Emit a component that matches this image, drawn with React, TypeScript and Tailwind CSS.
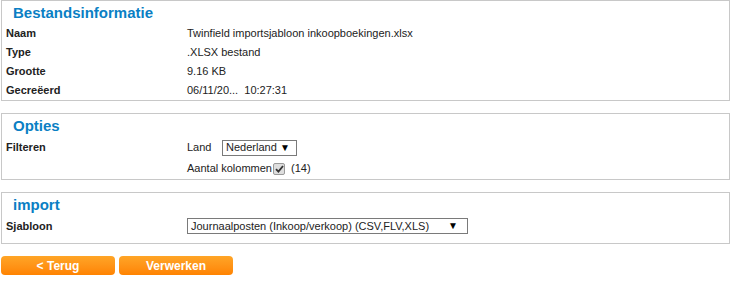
const rows = [
  ['Naam', 'Twinfield importsjabloon inkoopboekingen.xlsx'],
  ['Type', '.XLSX bestand'],
  ['Grootte', '9.16 KB'],
  ['Gecreëerd', '06/11/20...  10:27:31'],
]

function Panel({ title, children, className = '' }: { title: string; children: React.ReactNode; className?: string }) {
  return (
    <div className={`border border-[#c8c8c8] ${className}`}>
      <div className="h-[23px] pl-[11px] text-[15px] font-bold leading-[23px] text-[#0a7fc4]">{title}</div>
      {children}
    </div>
  )
}

function FakeSelect({ value, className }: { value: string; className: string }) {
  return (
    <div className={`flex h-[16px] items-center justify-between border border-[#7a7a7a] bg-white pl-[3px] pr-[6px] text-[11px] text-[#222] ${className}`}>
      <span>{value}</span>
      <span className="text-[10px] leading-none text-black">▼</span>
    </div>
  )
}

export default function App() {
  return (
    <div className="h-[283px] w-[737px] bg-white font-['Liberation_Sans',Arial,sans-serif] text-[11px] text-[#222]">
      <div className="flex w-[730px] flex-col gap-[12px] pl-px">
        <Panel title="Bestandsinformatie">
          {rows.map(([label, value]) => (
            <div key={label} className="grid h-[19px] grid-cols-[185px_1fr] items-center">
              <span className="pl-[4px] font-bold">{label}</span>
              <span className="whitespace-pre">{value}</span>
            </div>
          ))}
        </Panel>

        <Panel title="Opties">
          <div className="grid grid-cols-[185px_1fr]">
            <span className="flex h-[21px] items-center pl-[4px] font-bold">Filteren</span>
            <div className="flex flex-col">
              <div className="flex h-[21px] items-center">
                <span className="w-[35px]">Land</span>
                <FakeSelect value="Nederland" className="w-[75px]" />
              </div>
              <div className="flex h-[21px] items-center">
                <span>Aantal kolommen</span>
                <span className="ml-px flex h-[12px] w-[12px] items-center justify-center rounded-[2px] border border-[#9a9a9a] bg-[#dedede]">
                  <svg width="9" height="8" viewBox="0 0 9 8">
                    <path d="M1 4.2 L3.4 6.6 L8 1" fill="none" stroke="#333" strokeWidth="1.8" />
                  </svg>
                </span>
                <span className="ml-[6px]">(14)</span>
              </div>
            </div>
          </div>
        </Panel>

        <Panel title="import" className="pb-[7px]">
          <div className="grid h-[20px] grid-cols-[185px_1fr] items-center">
            <span className="pl-[4px] font-bold">Sjabloon</span>
            <FakeSelect value="Journaalposten (Inkoop/verkoop) (CSV,FLV,XLS)" className="w-[281px] pr-[9px]" />
          </div>
        </Panel>

        <div className="flex gap-[4px]">
          <button className="h-[19px] w-[114px] rounded-[4px] bg-gradient-to-b from-[#ffa526] to-[#ff8300] text-[12px] font-bold text-white">
            &lt; Terug
          </button>
          <button className="h-[19px] w-[114px] rounded-[4px] bg-gradient-to-b from-[#ffa526] to-[#ff8300] text-[12px] font-bold text-white">
            Verwerken
          </button>
        </div>
      </div>
    </div>
  )
}
